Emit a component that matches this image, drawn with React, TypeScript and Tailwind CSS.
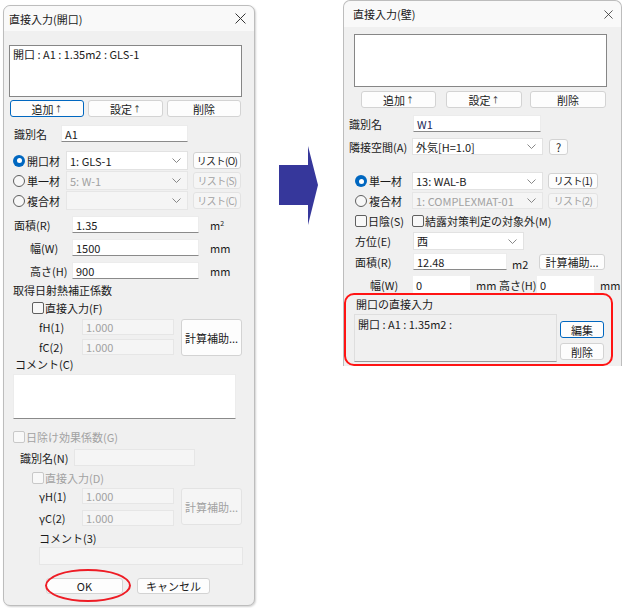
import type { ReactNode } from 'react';
import clsx from 'clsx';

const F = "font-['Noto_Sans_CJK_JP',sans-serif]";

function Close({ size }: { size: number }) {
  return (
    <svg width={size} height={size} viewBox="0 0 10 10" className="shrink-0">
      <path d="M0.5 0.5 L9.5 9.5 M9.5 0.5 L0.5 9.5" stroke="#333" strokeWidth="0.9" fill="none" />
    </svg>
  );
}

function Chevron() {
  return (
    <svg width="9" height="5" viewBox="0 0 9 5" className="shrink-0">
      <path d="M0.5 0.5 L4.5 4.5 L8.5 0.5" stroke="#7a7a7a" strokeWidth="0.9" fill="none" />
    </svg>
  );
}

function Up() {
  return <span className="ml-[1px] text-[8px] leading-[8px]">↑</span>;
}

function Btn({ className, focus, disabled, children }: { className?: string; focus?: boolean; disabled?: boolean; children: ReactNode }) {
  return (
    <div
      className={clsx(
        'flex shrink-0 items-center justify-center whitespace-nowrap rounded-[3px] border',
        focus ? 'border-[#0067c0] bg-[#fdfdfd]' : disabled ? 'border-[#e3e3e3] bg-[#f5f5f5] text-[#a2a2a2]' : 'border-[#d3d3d3] bg-[#fdfdfd]',
        className,
      )}
    >
      {children}
    </div>
  );
}

function Field({ className, disabled, children }: { className?: string; disabled?: boolean; children?: ReactNode }) {
  return (
    <div
      className={clsx(
        'flex shrink-0 items-center border pl-[3px]',
        disabled ? 'border-[#e6e6e6] bg-[#f5f5f5] text-[#a2a2a2]' : 'border-[#ececec] border-b-[#8a8a8a] bg-white',
        className,
      )}
    >
      {children}
    </div>
  );
}

function Select({ className, disabled, children }: { className?: string; disabled?: boolean; children?: ReactNode }) {
  return (
    <div
      className={clsx(
        'flex shrink-0 items-center justify-between border pl-[3px] pr-[6px]',
        disabled ? 'border-[#e6e6e6] bg-[#f5f5f5] text-[#a2a2a2]' : 'border-[#e2e2e2] bg-white',
        className,
      )}
    >
      <span>{children}</span>
      <Chevron />
    </div>
  );
}

function Radio({ on, disabled }: { on?: boolean; disabled?: boolean }) {
  return on ? (
    <span className="flex h-[12px] w-[12px] shrink-0 items-center justify-center rounded-full bg-[#0067c0]">
      <span className="h-[5px] w-[5px] rounded-full bg-white" />
    </span>
  ) : (
    <span className={clsx('h-[12px] w-[12px] shrink-0 rounded-full border bg-[#f7f7f7]', disabled ? 'border-[#c8c8c8]' : 'border-[#5f5f5f]')} />
  );
}

function Check({ disabled }: { disabled?: boolean }) {
  return <span className={clsx('h-[12px] w-[12px] shrink-0 rounded-[2px] border bg-[#f8f8f8]', disabled ? 'border-[#c8c8c8]' : 'border-[#5f5f5f]')} />;
}

function OpeningDialog() {
  return (
    <div className="ml-[3px] mt-[5px] flex h-[601px] w-[252px] shrink-0 flex-col rounded-[7px] border border-[#bdbdbd] bg-[#f0f0f0] shadow-[1px_1px_2px_rgba(0,0,0,0.18)]">
      <div className="flex h-[25px] shrink-0 items-center justify-between rounded-t-[7px] bg-[#f9f9f9] pl-[5px] pr-[8px]">
        <span>直接入力(開口)</span>
        <Close size={11} />
      </div>

      <div className="ml-[5px] mt-[14px] h-[52px] w-[233px] border border-[#868686] bg-white px-[3px] pt-[1px]">開口 : A1 : 1.35m2 : GLS-1</div>

      <div className="ml-[6px] mt-[3px] flex h-[17px] gap-[4px]">
        <Btn className="w-[74px]" focus>追加<Up /></Btn>
        <Btn className="w-[75px]">設定<Up /></Btn>
        <Btn className="w-[74px]">削除</Btn>
      </div>

      <div className="ml-[10px] mt-[8px] flex h-[17px] items-center">
        <span className="w-[47px]">識別名</span>
        <Field className="h-[17px] w-[127px]">A1</Field>
      </div>

      <div className="ml-[9px] mt-[9px] flex h-[19px] items-center">
        <span className="flex w-[53px] items-center gap-[2px]"><Radio on />開口材</span>
        <Select className="h-[19px] w-[122px]">1: GLS-1</Select>
        <Btn className="ml-[5px] h-[17px] w-[48px] text-[10px] tracking-[-0.6px]">リスト(O)</Btn>
      </div>
      <div className="ml-[9px] mt-[1px] flex h-[19px] items-center">
        <span className="flex w-[53px] items-center gap-[2px]"><Radio />単一材</span>
        <Select className="h-[19px] w-[122px]" disabled>5: W-1</Select>
        <Btn className="ml-[5px] h-[17px] w-[48px] text-[10px] tracking-[-0.6px]" disabled>リスト(S)</Btn>
      </div>
      <div className="ml-[9px] mt-[1px] flex h-[19px] items-center">
        <span className="flex w-[53px] items-center gap-[2px]"><Radio />複合材</span>
        <Select className="h-[19px] w-[122px]" disabled />
        <Btn className="ml-[5px] h-[17px] w-[48px] text-[10px] tracking-[-0.6px]" disabled>リスト(C)</Btn>
      </div>

      <div className="ml-[10px] mt-[6px] flex h-[17px] items-center">
        <span className="w-[58px]">面積(R)</span>
        <Field className="h-[17px] w-[127px]">1.35</Field>
        <span className="ml-[11px]">m<sup className="text-[7px]">2</sup></span>
      </div>
      <div className="ml-[26px] mt-[6px] flex h-[17px] items-center">
        <span className="w-[42px]">幅(W)</span>
        <Field className="h-[17px] w-[127px]">1500</Field>
        <span className="ml-[11px]">mm</span>
      </div>
      <div className="ml-[26px] mt-[6px] flex h-[17px] items-center">
        <span className="w-[42px]">高さ(H)</span>
        <Field className="h-[17px] w-[127px]">900</Field>
        <span className="ml-[11px]">mm</span>
      </div>

      <div className="ml-[9px] mt-[4px] flex h-[14px] items-center">取得日射熱補正係数</div>
      <div className="ml-[28px] mt-[4px] flex h-[13px] items-center gap-[1px]"><Check />直接入力(F)</div>

      <div className="ml-[35px] mt-[5px] flex">
        <div className="flex flex-col gap-[4px]">
          <div className="flex h-[16px] items-center"><span className="w-[43px]">fH(1)</span><Field disabled className="h-[16px] w-[92px]">1.000</Field></div>
          <div className="flex h-[16px] items-center"><span className="w-[43px]">fC(2)</span><Field disabled className="h-[16px] w-[92px]">1.000</Field></div>
        </div>
        <Btn className="ml-[7px] h-[37px] w-[61px]">計算補助...</Btn>
      </div>

      <div className="ml-[11px] mt-[1px] flex h-[14px] items-center">コメント(C)</div>
      <div className="ml-[9px] mt-[3px] h-[45px] w-[223px] border border-[#ececec] border-b-[#8a8a8a] bg-white" />

      <div className="ml-[9px] mt-[12px] flex h-[12px] items-center gap-[1px] text-[#a2a2a2]"><Check disabled />日除け効果係数(G)</div>
      <div className="ml-[16px] mt-[6px] flex h-[17px] items-center">
        <span className="w-[54px]">識別名(N)</span>
        <Field disabled className="h-[17px] w-[121px]" />
      </div>
      <div className="ml-[28px] mt-[6px] flex h-[12px] items-center gap-[1px] text-[#a2a2a2]"><Check disabled />直接入力(D)</div>

      <div className="ml-[35px] mt-[4px] flex">
        <div className="flex flex-col gap-[6px]">
          <div className="flex h-[16px] items-center"><span className="w-[43px]">γH(1)</span><Field disabled className="h-[16px] w-[92px]">1.000</Field></div>
          <div className="flex h-[16px] items-center"><span className="w-[43px]">γC(2)</span><Field disabled className="h-[16px] w-[92px]">1.000</Field></div>
        </div>
        <Btn className="ml-[7px] h-[37px] w-[61px]" disabled>計算補助...</Btn>
      </div>

      <div className="ml-[35px] mt-[5px] flex h-[14px] items-center">コメント(3)</div>
      <Field disabled className="ml-[35px] mt-[2px] h-[18px] w-[204px]" />

      <div className="ml-[42px] mt-[13px] flex h-[16px]">
        <div className="relative">
          <Btn className="h-[16px] w-[77px]">OK</Btn>
          <div className="absolute left-[-1px] top-[-9px] h-[33px] w-[86px] rounded-[50%] border-2 border-[#ee1c25]" />
        </div>
        <Btn className="ml-[14px] h-[16px] w-[73px]">キャンセル</Btn>
      </div>
    </div>
  );
}

function WallDialog() {
  return (
    <div className="flex h-[366px] w-[279px] shrink-0 flex-col rounded-t-[7px] border border-b-0 border-[#bdbdbd] bg-[#f0f0f0]">
      <div className="flex h-[26px] shrink-0 items-center justify-between rounded-t-[7px] bg-[#f9f9f9] pl-[9px] pr-[8px]">
        <span>直接入力(壁)</span>
        <Close size={9} />
      </div>

      <div className="ml-[10px] mt-[7px] h-[53px] w-[253px] border border-[#868686] bg-white" />

      <div className="ml-[17px] mt-[4px] flex h-[17px]">
        <Btn className="w-[75px]">追加<Up /></Btn>
        <Btn className="ml-[10px] w-[76px]">設定<Up /></Btn>
        <Btn className="ml-[8px] w-[76px]">削除</Btn>
      </div>

      <div className="ml-[5px] mt-[7px] flex h-[17px] items-center">
        <span className="w-[64px]">識別名</span>
        <Field className="h-[17px] w-[128px] text-[#1c2a5a]">W1</Field>
      </div>
      <div className="ml-[5px] mt-[6px] flex h-[17px] items-center">
        <span className="w-[63px] whitespace-nowrap">隣接空間(A)</span>
        <Select className="h-[17px] w-[131px]">外気[H=1.0]</Select>
        <Btn className="ml-[6px] h-[16px] w-[19px]">?</Btn>
      </div>

      <div className="ml-[11px] mt-[17px] flex h-[18px] items-center">
        <span className="flex w-[57px] items-center gap-[2px]"><Radio on />単一材</span>
        <Select className="h-[18px] w-[131px]">13: WAL-B</Select>
        <Btn className="ml-[5px] h-[16px] w-[50px] text-[10px] tracking-[-0.6px]">リスト(1)</Btn>
      </div>
      <div className="ml-[11px] mt-[2px] flex h-[17px] items-center">
        <span className="flex w-[57px] items-center gap-[2px]"><Radio />複合材</span>
        <Select className="h-[17px] w-[131px]" disabled>1: COMPLEXMAT-01</Select>
        <Btn className="ml-[5px] h-[16px] w-[50px] text-[10px] tracking-[-0.6px]" disabled>リスト(2)</Btn>
      </div>

      <div className="ml-[11px] mt-[6px] flex h-[12px] items-center whitespace-nowrap">
        <span className="flex w-[57px] items-center gap-[1px]"><Check />日陰(S)</span>
        <span className="flex items-center gap-[1px]"><Check />結露対策判定の対象外(M)</span>
      </div>

      <div className="ml-[11px] mt-[5px] flex h-[18px] items-center">
        <span className="w-[58px]">方位(E)</span>
        <Select className="h-[18px] w-[111px]">西</Select>
      </div>
      <div className="ml-[11px] mt-[3px] flex h-[17px] items-center">
        <span className="w-[58px]">面積(R)</span>
        <Field className="h-[17px] w-[94px]">12.48</Field>
        <span className="ml-[5px] mt-[4px] w-[27px]">m2</span>
        <Btn className="h-[16px] w-[66px]">計算補助...</Btn>
      </div>
      <div className="ml-[26px] mt-[6px] flex h-[17px] items-center whitespace-nowrap">
        <span className="w-[43px]">幅(W)</span>
        <Field className="h-[17px] w-[57px] border-0 bg-white">0</Field>
        <span className="ml-[6px] w-[23px]">mm</span>
        <span className="w-[38px]">高さ(H)</span>
        <Field className="h-[17px] w-[57px] border-0 bg-white">0</Field>
        <span className="ml-[6px]">mm</span>
      </div>

      <div className="flex h-[73px] w-[269px] flex-col rounded-[10px] border-2 border-[#ff1414]">
        <div className="ml-[10px] mt-[2px] flex h-[14px] items-center">開口の直接入力</div>
        <div className="mt-[3px] flex">
          <div className="ml-[8px] h-[48px] w-[203px] border border-[#dedede] border-b-[#9a9a9a] bg-[#f0f0f0] pl-[3px] pt-[2px]">開口 : A1 : 1.35m2 :</div>
          <div className="ml-[3px] mt-[7px] flex flex-col gap-[5px]">
            <Btn className="h-[17px] w-[44px]" focus>編集</Btn>
            <Btn className="h-[17px] w-[44px]">削除</Btn>
          </div>
        </div>
      </div>
    </div>
  );
}

export default function App() {
  return (
    <div className={clsx('flex h-[608px] w-[624px] overflow-hidden bg-white text-[11px] leading-[14px] text-[#1a1a1a]', F)}>
      <OpeningDialog />
      <div className="w-[88px] shrink-0 pl-[24px] pt-[146px]">
        <svg width="40" height="79" viewBox="0 0 40 79">
          <polygon points="0,19 29,19 29,0 39,39 29,79 29,59 0,59" fill="#36379b" />
        </svg>
      </div>
      <WallDialog />
    </div>
  );
}
